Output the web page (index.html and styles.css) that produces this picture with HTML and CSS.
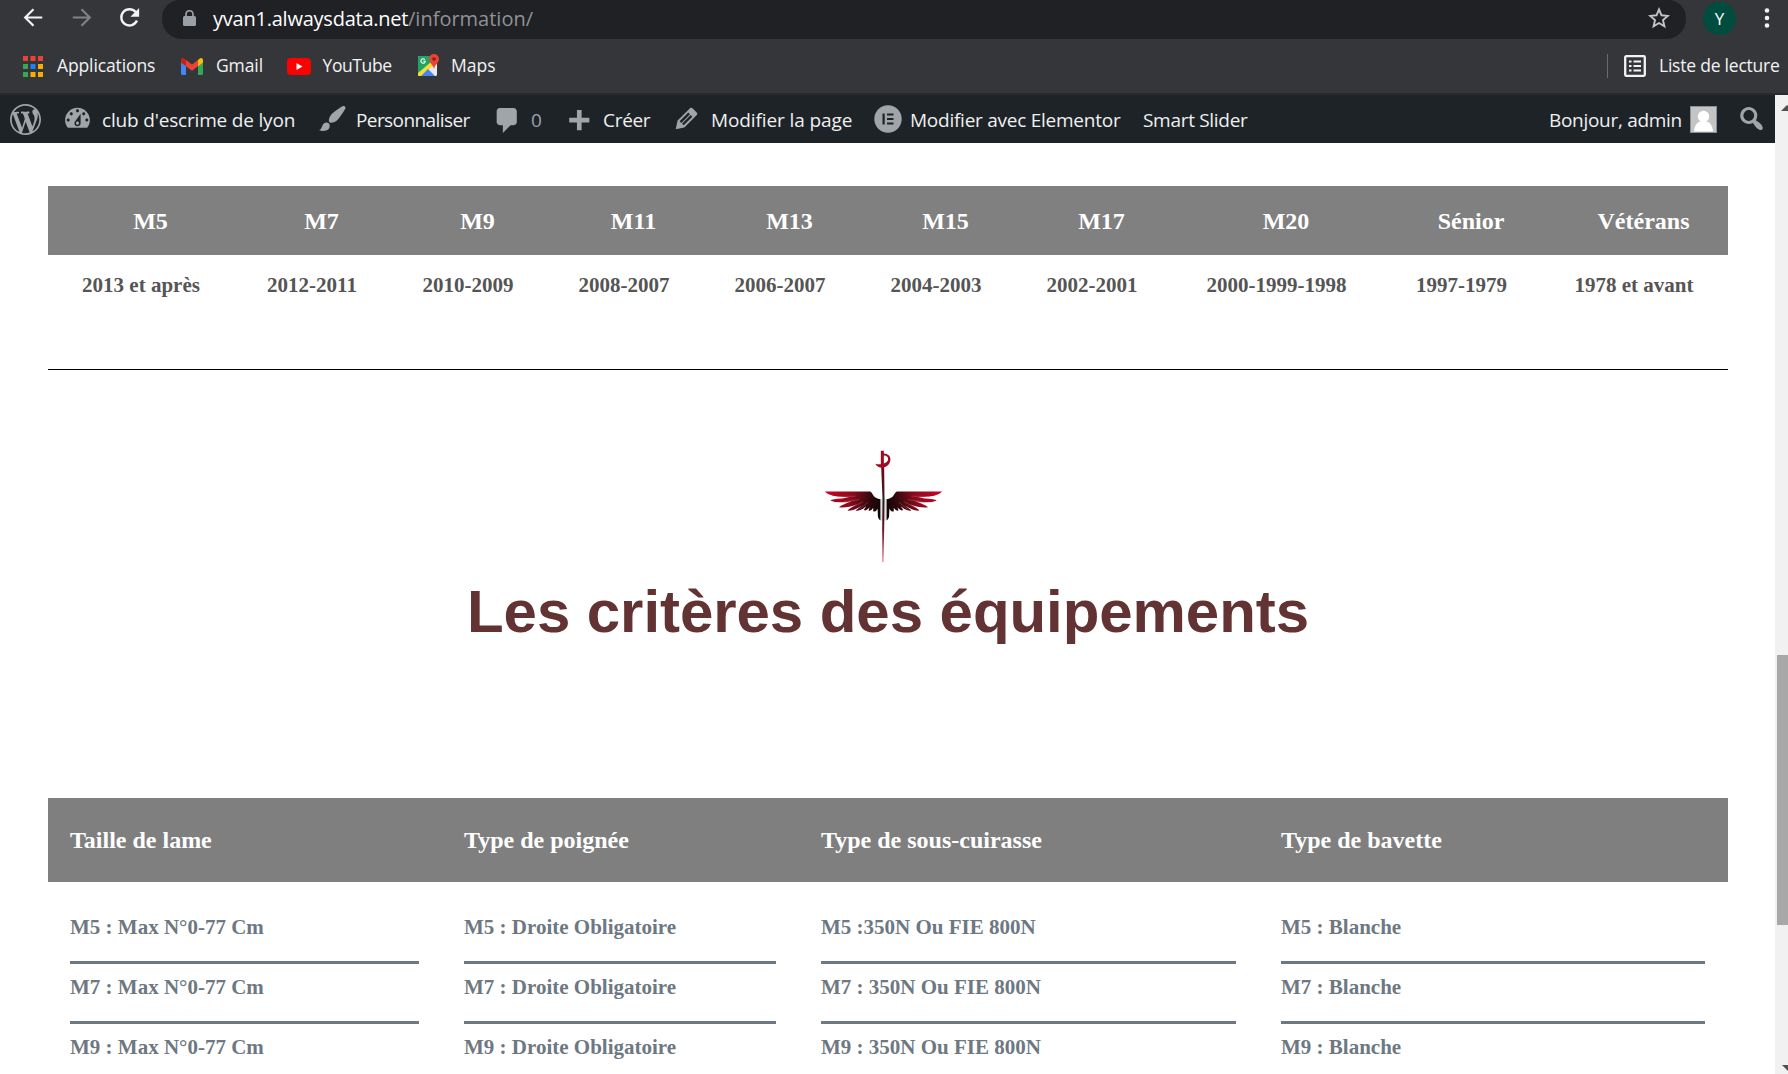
FILE: index.html
```html
<!DOCTYPE html>
<html lang="fr">
<head>
<meta charset="utf-8">
<title>Information – club d'escrime de lyon</title>
<link rel="stylesheet" href="styles.css">
</head>
<body>
<header class="browser">
  <div class="toolbar">
    <svg class="nav back" viewBox="0 0 24 24"><path d="M22 12H3M12 2.500L2.500 12l9.500 9.500" fill="none" stroke="#f1f3f4" stroke-width="2.500"/></svg>
    <svg class="nav forward" viewBox="0 0 24 24"><path d="M2 12h19M12 2.500l9.500 9.500-9.500 9.500" fill="none" stroke="#808184" stroke-width="2.500"/></svg>
    <svg class="nav reload" viewBox="0 0 24 24"><path d="M20.500 15.500A9.300 9.300 0 1 1 19 5.800" fill="none" stroke="#f1f3f4" stroke-width="2.700"/><path d="M23 1v10H13z" fill="#f1f3f4"/></svg>
    <div class="omnibox">
      <svg class="lock" viewBox="0 0 13 16"><rect y="6" width="13" height="10" rx="1.500" fill="#9aa0a6"/><path d="M3 7V4.200a3.500 3.500 0 0 1 7 0V7" fill="none" stroke="#9aa0a6" stroke-width="1.700"/></svg>
      <span class="host t">yvan1.alwaysdata.net</span><span class="path t">/information/</span>
      <svg class="star" viewBox="0 0 22 22"><path d="M11 2.500l2.500 5.800 6.300.6-4.800 4.200 1.400 6.200L11 16l-5.400 3.300L7 13.100 2.200 8.900l6.300-.6z" fill="none" stroke="#c4c5c7" stroke-width="1.900"/></svg>
    </div>
    <span class="profile">Y</span>
    <svg class="dots" viewBox="0 0 6 20"><circle cx="3" cy="2.500" r="2.300"/><circle cx="3" cy="10" r="2.300"/><circle cx="3" cy="17.500" r="2.300"/></svg>
  </div>
  <nav class="bookmarks">
    <svg class="apps" viewBox="0 0 20 21"><path d="M0 0h5v5H0zM7.500 0h5v5h-5zM15 0h5v5h-5z" fill="#ea4335"/><path d="M0 8h5v5H0zM0 16h5v5H0z" fill="#34a853"/><path d="M7.500 8h5v5h-5z" fill="#1a82f5"/><path d="M15 8h5v5h-5zM7.500 16h5v5h-5zM15 16h5v5h-5z" fill="#fbab05"/></svg>
    <span class="t b1">Applications</span>
    <svg class="gmail" viewBox="0 0 22 17"><path d="M0 3v12.500A1.500 1.500 0 0 0 1.500 17H5V6.500z" fill="#4285f4"/><path d="M22 3v12.500a1.500 1.500 0 0 1-1.500 1.500H17V6.500z" fill="#34a853"/><path d="M17 2v6.200l5-3.700V2.300C22 .2 19.800-.5 18.500.7z" fill="#fbbc04"/><path d="M5 2v6.200L0 4.500V2.300C0 .2 2.200-.5 3.500.7z" fill="#c5221f"/><path d="M5 1.900l6 4.500 6-4.500v6.300l-6 4.500-6-4.500z" fill="#ea4335"/></svg>
    <span class="t b2">Gmail</span>
    <svg class="youtube" viewBox="0 0 24 17"><rect width="24" height="17" rx="4" fill="#f00"/><path d="M9.500 5v7l6-3.500z" fill="#fff"/></svg>
    <span class="t b3">YouTube</span>
    <svg class="maps" viewBox="0 0 21 22"><rect y="2" width="19" height="20" rx="1.500" fill="#e8eaed"/><path d="M1.500 2H14l-1 9L0 21.500v-18A1.500 1.500 0 0 1 1.500 2z" fill="#1fa463"/><path d="M0 19l13-11 3 3L4 22H1a1 1 0 0 1-1-1z" fill="#fdd835"/><path d="M3 22l7-7 7 7z" fill="#4285f4"/><path d="M16 0a5 5 0 0 0-5 5c0 4 4 5 5 10 1-5 5-6 5-10a5 5 0 0 0-5-5z" fill="#ea4335"/><circle cx="16" cy="5" r="1.800" fill="#8c1d18"/><path d="M6.800 5.600A2.200 2.200 0 1 0 7.300 7.300H5.200" fill="none" stroke="#fff" stroke-width="1.100"/></svg>
    <span class="t b4">Maps</span>
    <span class="divider"></span>
    <svg class="list" viewBox="0 0 22 22"><rect x="1.200" y="1.200" width="19.600" height="19.600" rx="1" fill="none" stroke="#f1f3f4" stroke-width="2.300"/><path d="M5 6.500h2.500M5 11h2.500M5 15.500h2.500M9.500 6.500H17M9.500 11H17M9.500 15.500H17" stroke="#f1f3f4" stroke-width="2.200"/></svg>
    <span class="t b5">Liste de lecture</span>
  </nav>
</header>
<div class="viewport">
  <div class="page">
    <nav class="adminbar">
      <svg class="ico wp" viewBox="0 0 20 20"><path d="M20 10c0-5.510-4.490-10-10-10C4.480 0 0 4.490 0 10c0 5.520 4.480 10 10 10 5.510 0 10-4.480 10-10zM7.780 15.370L4.370 6.220c.55-.02 1.170-.08 1.170-.08.5-.06.44-1.130-.06-1.110 0 0-1.450.11-2.370.11-.18 0-.37 0-.58-.01C4.120 2.690 6.870 1.110 10 1.110c2.330 0 4.450.87 6.050 2.340-.68-.11-1.650.39-1.650 1.580 0 .74.45 1.360.9 2.100.35.61.55 1.360.55 2.460 0 1.490-1.400 5-1.400 5l-3.030-8.370c.54-.02.82-.17.82-.17.5-.05.44-1.250-.06-1.220 0 0-1.440.12-2.380.12-.87 0-2.330-.12-2.330-.12-.5-.03-.56 1.200-.06 1.220l.92.08 1.260 3.410zM17.410 10c.24-.64.74-1.870.43-4.250.7 1.290 1.050 2.710 1.050 4.250 0 3.290-1.730 6.240-4.400 7.780.97-2.590 1.940-5.200 2.920-7.780zM6.100 18.090C3.120 16.650 1.110 13.530 1.110 10c0-1.300.23-2.480.72-3.590C3.250 10.300 4.670 14.200 6.100 18.090zm4.030-6.630l2.580 6.980c-.86.29-1.760.45-2.710.45-.79 0-1.570-.11-2.290-.33.81-2.380 1.620-4.740 2.420-7.100z"/></svg>
      <span class="item dash">
        <svg class="ico" viewBox="0 0 20 20"><path fill-rule="evenodd" d="M3.760 16h12.480c1.100-1.370 1.760-3.110 1.760-5 0-4.420-3.580-8-8-8s-8 3.580-8 8c0 1.890.66 3.630 1.760 5zM10 4c.55 0 1 .45 1 1s-.45 1-1 1-1-.45-1-1 .45-1 1-1zM6 6c.55 0 1 .45 1 1s-.45 1-1 1-1-.45-1-1 .45-1 1-1zm8 0c.55 0 1 .45 1 1s-.45 1-1 1-1-.45-1-1 .45-1 1-1zm-5.370 5.550L12 7v6c0 1.100-.9 2-2 2s-2-.9-2-2c0-.57.24-1.080.63-1.450zM4 10c.55 0 1 .45 1 1s-.45 1-1 1-1-.45-1-1 .45-1 1-1zm12 0c.55 0 1 .45 1 1s-.45 1-1 1-1-.45-1-1 .45-1 1-1zm-5 3c0-.55-.45-1-1-1s-1 .45-1 1 .45 1 1 1 1-.45 1-1z"/></svg>
        <span class="t">club d'escrime de lyon</span>
      </span>
      <span class="item brush">
        <svg class="ico" viewBox="0 0 20 20"><path d="M18.330 3.570s.27-.8-.31-1.360c-.53-.52-1.220-.24-1.220-.24-.61.3-5.760 3.470-7.670 5.570-.86.96-2.060 3.790-1.090 4.820.92.98 3.960-.17 4.790-1 2.060-2.060 5.210-7.170 5.500-7.790zM1.400 17.650c2.370-1.560 1.460-3.410 3.230-4.640.93-.65 2.220-.62 3.080.29.63.67.8 2.570-.16 3.460-1.570 1.450-4 1.550-6.150.89z"/></svg>
        <span class="t">Personnaliser</span>
      </span>
      <span class="item comment">
        <svg class="ico" viewBox="0 0 20 20"><path d="M5 2h9c1.100 0 2 .9 2 2v7c0 1.100-.9 2-2 2h-2l-5 5v-5H5c-1.100 0-2-.9-2-2V4c0-1.100.9-2 2-2z"/></svg>
        <span class="t">0</span>
      </span>
      <span class="item create">
        <svg class="ico" viewBox="0 0 20 20"><path d="M17 7v3h-5v5H9v-5H4V7h5V2h3v5h5z"/></svg>
        <span class="t">Créer</span>
      </span>
      <span class="item edit">
        <svg class="ico" viewBox="0 0 20 20"><path d="M13.890 3.390l2.710 2.720c.46.46.42 1.240.03 1.640l-8.010 8.020-5.560 1.160 1.160-5.580s7.600-7.630 7.990-8.030c.39-.39 1.220-.39 1.680.07zm-2.730 2.790l-5.590 5.610 1.110 1.110 5.540-5.650zm-2.970 8.230l5.580-5.600-1.070-1.080-5.590 5.600z"/></svg>
        <span class="t">Modifier la page</span>
      </span>
      <span class="item elementor">
        <svg class="ico" viewBox="0 0 28 28"><circle cx="14" cy="14" r="13.700"/><path d="M8.500 8.500h2.200v11H8.500zM13 8.500h6.500v2.100H13zM13 13h6.500v2.100H13zM13 17.400h6.500v2.100H13z" fill="#1d2327"/></svg>
        <span class="t">Modifier avec Elementor</span>
      </span>
      <span class="item slider"><span class="t">Smart Slider</span></span>
      <span class="item account">
        <span class="t">Bonjour, admin</span>
        <svg class="gravatar" viewBox="0 0 27 27"><rect x=".5" y=".5" width="26" height="26" fill="#c4c4c4" stroke="#8c8f94"/><circle cx="13.500" cy="10.500" r="5.700" fill="#fff"/><path d="M4 25.500c.6-6.500 3.500-10.500 9.500-10.500s8.900 4 9.500 10.500z" fill="#fff"/></svg>
      </span>
      <svg class="ico search" viewBox="0 0 20 20"><path d="M12.140 4.180c1.870 1.870 2.110 4.750.72 6.890.12.1.22.21.36.31.2.16.47.36.81.59.34.24.56.39.66.47.42.31.73.57.94.78.32.32.6.65.84 1 .25.35.44.69.59 1.040.14.35.21.68.18 1-.02.32-.14.59-.36.81s-.49.34-.81.36c-.31.02-.65-.04-.99-.19-.35-.14-.7-.34-1.040-.59-.35-.24-.68-.52-1-.84-.21-.21-.47-.52-.77-.93-.1-.13-.25-.35-.47-.66-.22-.32-.4-.57-.56-.78-.16-.2-.29-.35-.44-.5-2.070 1.090-4.690.76-6.440-.98-2.140-2.150-2.140-5.640 0-7.780 2.150-2.150 5.630-2.150 7.780 0zm-1.410 6.360c1.360-1.370 1.360-3.580 0-4.950-1.370-1.370-3.590-1.370-4.950 0-1.370 1.370-1.370 3.580 0 4.950 1.360 1.370 3.580 1.370 4.950 0z"/></svg>
    </nav>
    <main class="content">
      <table class="ages">
        <colgroup><col class="w186"><col class="w156"><col class="w156"><col class="w156"><col class="w156"><col class="w156"><col class="w156"><col class="w213"><col class="w157"><col class="w188"></colgroup>
        <thead><tr><th>M5</th><th>M7</th><th>M9</th><th>M11</th><th>M13</th><th>M15</th><th>M17</th><th>M20</th><th>Sénior</th><th>Vétérans</th></tr></thead>
        <tbody><tr><td>2013 et après</td><td>2012-2011</td><td>2010-2009</td><td>2008-2007</td><td>2006-2007</td><td>2004-2003</td><td>2002-2001</td><td>2000-1999-1998</td><td>1997-1979</td><td>1978 et avant</td></tr></tbody>
      </table>
      <hr class="rule">
      <section class="title">
        <svg class="logo" viewBox="70 58 358 340">
          <defs>
            <linearGradient id="wing" gradientUnits="userSpaceOnUse" x1="72" y1="190" x2="244" y2="240"><stop offset="0" stop-color="#d00023"/><stop offset=".45" stop-color="#8a0a1c"/><stop offset=".8" stop-color="#28080c"/><stop offset="1" stop-color="#0c0405"/></linearGradient>
            <linearGradient id="blade" gradientUnits="userSpaceOnUse" x1="0" y1="60" x2="0" y2="396"><stop offset="0" stop-color="#b80522"/><stop offset=".18" stop-color="#6e0815"/><stop offset=".45" stop-color="#222"/><stop offset=".62" stop-color="#4a1018"/><stop offset="1" stop-color="#d84a5c"/></linearGradient>
            <g id="half"><path d="M72 183H208C214 183 217 197 226 202Q233 206 240 206V270Q231 266 232 250L231 234Q226 247 218 242L218 232Q210 244 204 240L207 230Q196 244 190 238L197 227Q178 244 165 240L184 225Q158 243 141 240Q148 232 170 221Q136 234 115 230Q124 222 154 212Q110 220 89 210Q94 206 124 204L146 200Q88 201 72 183Z" fill="url(#wing)"/><path d="M115 198L165 197M130 214L176 207M152 231L188 214M176 237L203 215" stroke="#fff" stroke-opacity=".35" stroke-width="1.500" fill="none"/></g>
          </defs>
          <use href="#half"/><use href="#half" transform="matrix(-1 0 0 1 498 0)"/>
          <path d="M241 204h16v64l-6 4h-6l-4-4z" fill="#e4e4e4"/>
          <path d="M242 108L251 108L252 205L251 300L248.500 396H246L245 300L246 205Z" fill="url(#blade)"/>
          <path d="M241 60h9v50h-9zM224 99Q235 102 247 99Q262 96 263 86Q262 74 249 75L249 68Q270 70 270 87Q267 108 247 111Q232 112 224 99Z" fill="#9c0b22"/>
        </svg>
        <h1>Les critères des équipements</h1>
      </section>
      <table class="gear">
        <colgroup><col class="g1"><col class="g2"><col class="g3"><col class="g4"></colgroup>
        <thead><tr><th>Taille de lame</th><th>Type de poignée</th><th>Type de sous-cuirasse</th><th>Type de bavette</th></tr></thead>
        <tbody>
          <tr><td><p>M5 : Max N°0-77 Cm</p></td><td><p>M5 : Droite Obligatoire</p></td><td><p>M5 :350N Ou FIE 800N</p></td><td><p>M5 : Blanche</p></td></tr>
          <tr><td><p>M7 : Max N°0-77 Cm</p></td><td><p>M7 : Droite Obligatoire</p></td><td><p>M7 : 350N Ou FIE 800N</p></td><td><p>M7 : Blanche</p></td></tr>
          <tr><td><p>M9 : Max N°0-77 Cm</p></td><td><p>M9 : Droite Obligatoire</p></td><td><p>M9 : 350N Ou FIE 800N</p></td><td><p>M9 : Blanche</p></td></tr>
        </tbody>
      </table>
    </main>
  </div>
  <aside class="scrollbar"><i class="up"></i><i class="thumb"></i><i class="down"></i></aside>
</div>
</body>
</html>
```
FILE: styles.css
```css
* { box-sizing: border-box; }
body { margin: 0; width: 1788px; height: 1074px; overflow: hidden; display: flex; flex-direction: column; background: #fff; font-family: "Liberation Serif", "Times New Roman", serif; }
svg { display: block; flex: none; }
.t { flex: none; white-space: nowrap; }

.browser { flex: none; height: 95px; background: #35363a; border-bottom: 2px solid #292a2d; color: #f1f3f4; font-family: "Open Sans", "Noto Sans", sans-serif; }
.toolbar { display: flex; align-items: flex-start; height: 39px; }
.nav { width: 21px; height: 21px; margin-top: 7px; }
.back { margin-left: 23px; }
.forward { margin-left: 27px; }
.reload { margin-left: 27px; }
.omnibox { display: flex; align-items: flex-start; width: 1524px; height: 39px; margin-left: 22px; background: #202124; border-radius: 18px 18px 20px 20px; font-size: 20px; line-height: 37px; }
.lock { width: 13px; height: 16px; margin: 10px 17px 0 21px; }
.host { width: 195px; color: #fff; letter-spacing: -0.23px; }
.path { color: #8f9296; }
.star { width: 22px; height: 22px; margin: 7px 16px 0 auto; }
.profile { width: 33px; height: 33px; margin: 2px 0 0 17px; border-radius: 50%; background: #004d40; color: #fff; text-align: center; font-size: 17px; line-height: 33px; }
.dots { width: 6px; height: 20px; margin: 8px 0 0 28px; fill: #f1f3f4; }

.bookmarks { display: flex; align-items: center; height: 54px; font-size: 17.5px; line-height: 52px; }
.bookmarks .t { height: 54px; }
.apps { width: 20px; height: 21px; margin-left: 23px; }
.gmail { width: 22px; height: 17px; }
.youtube { width: 24px; height: 17px; }
.maps { width: 21px; height: 22px; margin-top: -2px; }
.list { width: 22px; height: 22px; margin-left: 16px; }
.b1 { width: 138px; padding-left: 14px; letter-spacing: -0.12px; }
.b2 { width: 84px; padding-left: 13px; letter-spacing: -0.1px; }
.b3 { width: 107px; padding-left: 11.5px; letter-spacing: -0.4px; }
.b4 { padding-left: 12px; }
.b5 { width: 142px; padding-left: 13px; letter-spacing: -0.22px; }
.divider { width: 1px; height: 24px; margin-left: auto; background: #6a6b6f; }

.viewport { flex: 1; display: flex; min-height: 0; }
.page { width: 1775px; overflow: hidden; }
.adminbar { display: flex; align-items: flex-start; height: 48px; background: #1d2327; color: #f0f0f1; font-family: "Open Sans", "Noto Sans", sans-serif; font-size: 19px; line-height: 50px; }
.item { display: flex; flex: none; align-items: flex-start; height: 48px; }
.ico { width: 31px; height: 31px; margin-top: 8px; fill: #a0a5aa; }
.wp { margin: 9px 21px 0 10px; }
.dash { width: 255px; gap: 9px; letter-spacing: -0.18px; }
.brush { width: 175px; gap: 8px; letter-spacing: -0.58px; }
.comment { width: 71px; gap: 8px; color: #9ca2a7; }
.comment .ico { margin-top: 10px; }
.create { width: 108px; gap: 9px; letter-spacing: -0.3px; }
.create .ico { margin-top: 12px; }
.edit { width: 203px; gap: 9px; letter-spacing: -0.1px; }
.elementor { width: 269px; gap: 8px; letter-spacing: -0.25px; }
.elementor .ico { width: 28px; height: 28px; margin-top: 10px; }
.slider { letter-spacing: -0.3px; }
.account { width: 187px; margin-left: auto; gap: 8px; letter-spacing: -0.3px; }
.gravatar { width: 27px; height: 27px; margin-top: 11px; }
.search { margin-right: 8px; }

.content { padding: 43px 47px 0 48px; }
table { width: 1680px; table-layout: fixed; border-collapse: collapse; }
th, td { padding: 0; font-weight: bold; white-space: nowrap; }
.ages th { height: 69px; padding: 1px 0 0 19px; background: #808080; color: #fff; font-size: 24px; line-height: 68px; }
.ages td { height: 60px; color: #555; font-size: 21px; line-height: 60px; text-align: center; }
.w186 { width: 186px; } .w156 { width: 156px; } .w213 { width: 213px; } .w157 { width: 157px; } .w188 { width: 188px; }
.rule { margin: 54px 0 0; border: 0; height: 1px; background: #000; }
.title { display: flex; flex-direction: column; align-items: center; height: 428px; padding-top: 80px; }
.logo { width: 119px; height: 113px; margin-right: 9px; }
h1 { margin: 14px 0 0; color: #633333; font: bold 60px/70px "Liberation Sans", Arial, sans-serif; letter-spacing: -0.06px; }
.g1 { width: 394px; } .g2 { width: 357px; } .g3 { width: 460px; } .g4 { width: 469px; }
.gear th { height: 84px; padding-left: 22px; background: #7f7f7f; color: #fff; font-size: 24px; text-align: left; }
.gear td { padding: 0 23px 0 22px; color: #6d7882; font-size: 21px; }
.gear tr:first-child td { padding-top: 22px; }
.gear p { height: 60px; margin: 0; line-height: 46px; border-bottom: 3px solid #6d7882; }

.scrollbar { display: flex; flex-direction: column; width: 13px; background: #f1f1f1; overflow: hidden; }
.scrollbar i { display: block; flex: none; }
.up { margin: 10px 0 0 6px; width: 12px; border: 6px solid transparent; border-top: 0; border-bottom-color: #505050; }
.thumb { height: 270px; margin: 544px 0 0 2px; background: #a8a8a8; }
.down { margin: 140px 0 0 7px; width: 14px; border: 7px solid transparent; border-bottom: 0; border-top-color: #505050; }
```
